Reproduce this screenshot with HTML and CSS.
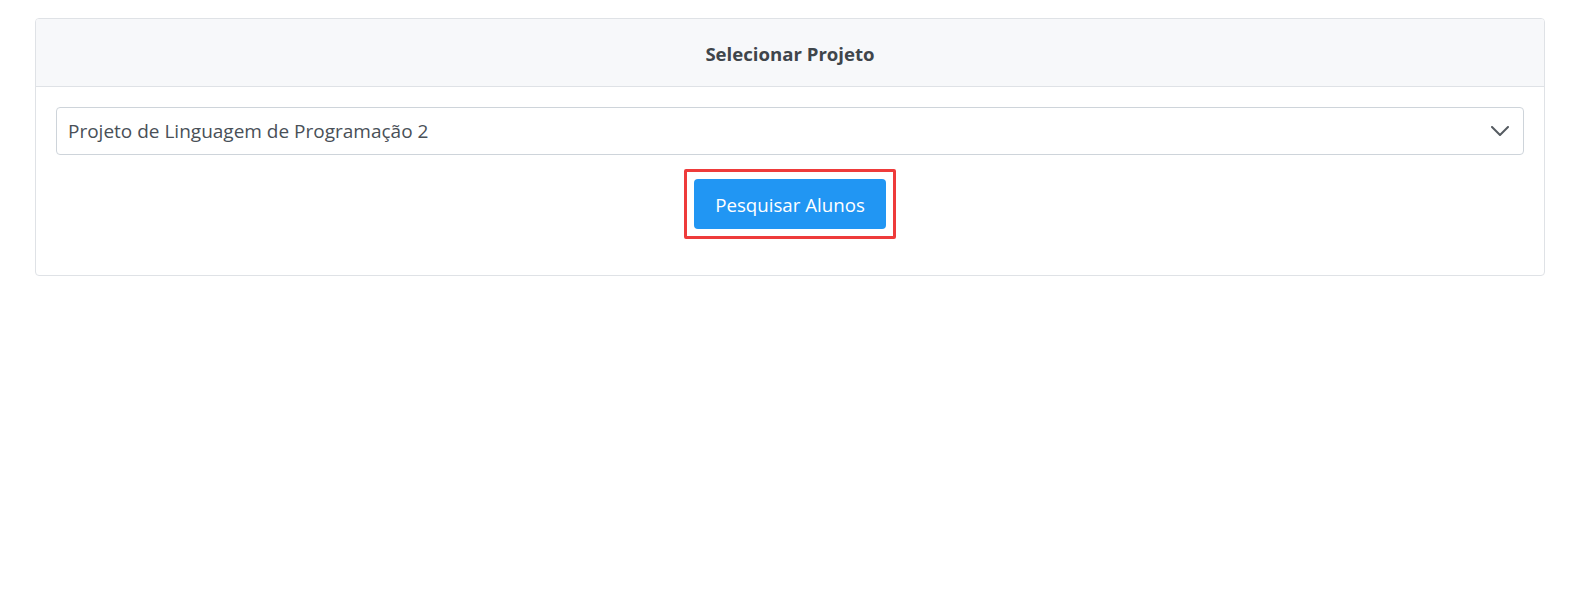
FILE: index.html
```html
<!DOCTYPE html>
<html lang="pt">
<head>
<meta charset="utf-8">
<title>Selecionar Projeto</title>
<link rel="stylesheet" href="styles.css">
</head>
<body>
<div class="page">
  <div class="card">
    <div class="card-header">Selecionar Projeto</div>
    <div class="card-body">
      <div class="select">
        <span class="select-text">Projeto de Linguagem de Programação 2</span>
        <svg class="chevron" width="18" height="10" viewBox="0 0 18 10"><path d="M1 1 L9 9 L17 1" fill="none" stroke="#555b61" stroke-width="2" stroke-linecap="round" stroke-linejoin="round"/></svg>
      </div>
      <div class="actions">
        <div class="highlight">
          <button class="btn">Pesquisar Alunos</button>
        </div>
      </div>
    </div>
  </div>
</div>
</body>
</html>
```

FILE: styles.css
```css
html, body {
  margin: 0;
  padding: 0;
  background: #ffffff;
  font-family: "Open Sans", "Noto Sans", "Liberation Sans", sans-serif;
}

.page {
  padding: 18px 44px 0 35px;
}

.card {
  border: 1px solid #dfe2e6;
  border-radius: 4px;
  background: #fff;
  overflow: hidden;
}

.card-header {
  background: #f7f8fa;
  border-bottom: 1px solid #dfe2e6;
  padding: 21px 20px 19px;
  line-height: 27px;
  font-size: 18.6px;
  font-weight: 700;
  color: #3f454b;
  text-align: center;
}

.card-body {
  padding: 20px;
}

.select {
  height: 48px;
  box-sizing: border-box;
  border: 1px solid #ced4da;
  border-radius: 4px;
  display: flex;
  align-items: center;
  justify-content: space-between;
  padding: 0 14px 0 11px;
}

.select-text {
  font-size: 19px;
  color: #495057;
}

.chevron {
  display: block;
}

.actions {
  display: flex;
  justify-content: center;
  margin: 14px 0 16px;
}

.highlight {
  border: 3px solid #ee3b3b;
  border-radius: 2px;
  padding: 7px;
  display: flex;
}

.btn {
  width: 192px;
  height: 50px;
  border: none;
  border-radius: 4px;
  background: #2196f3;
  color: #fff;
  font-family: "Open Sans", "Noto Sans", "Liberation Sans", sans-serif;
  font-size: 18.7px;
  padding: 0;
  cursor: pointer;
}
```
